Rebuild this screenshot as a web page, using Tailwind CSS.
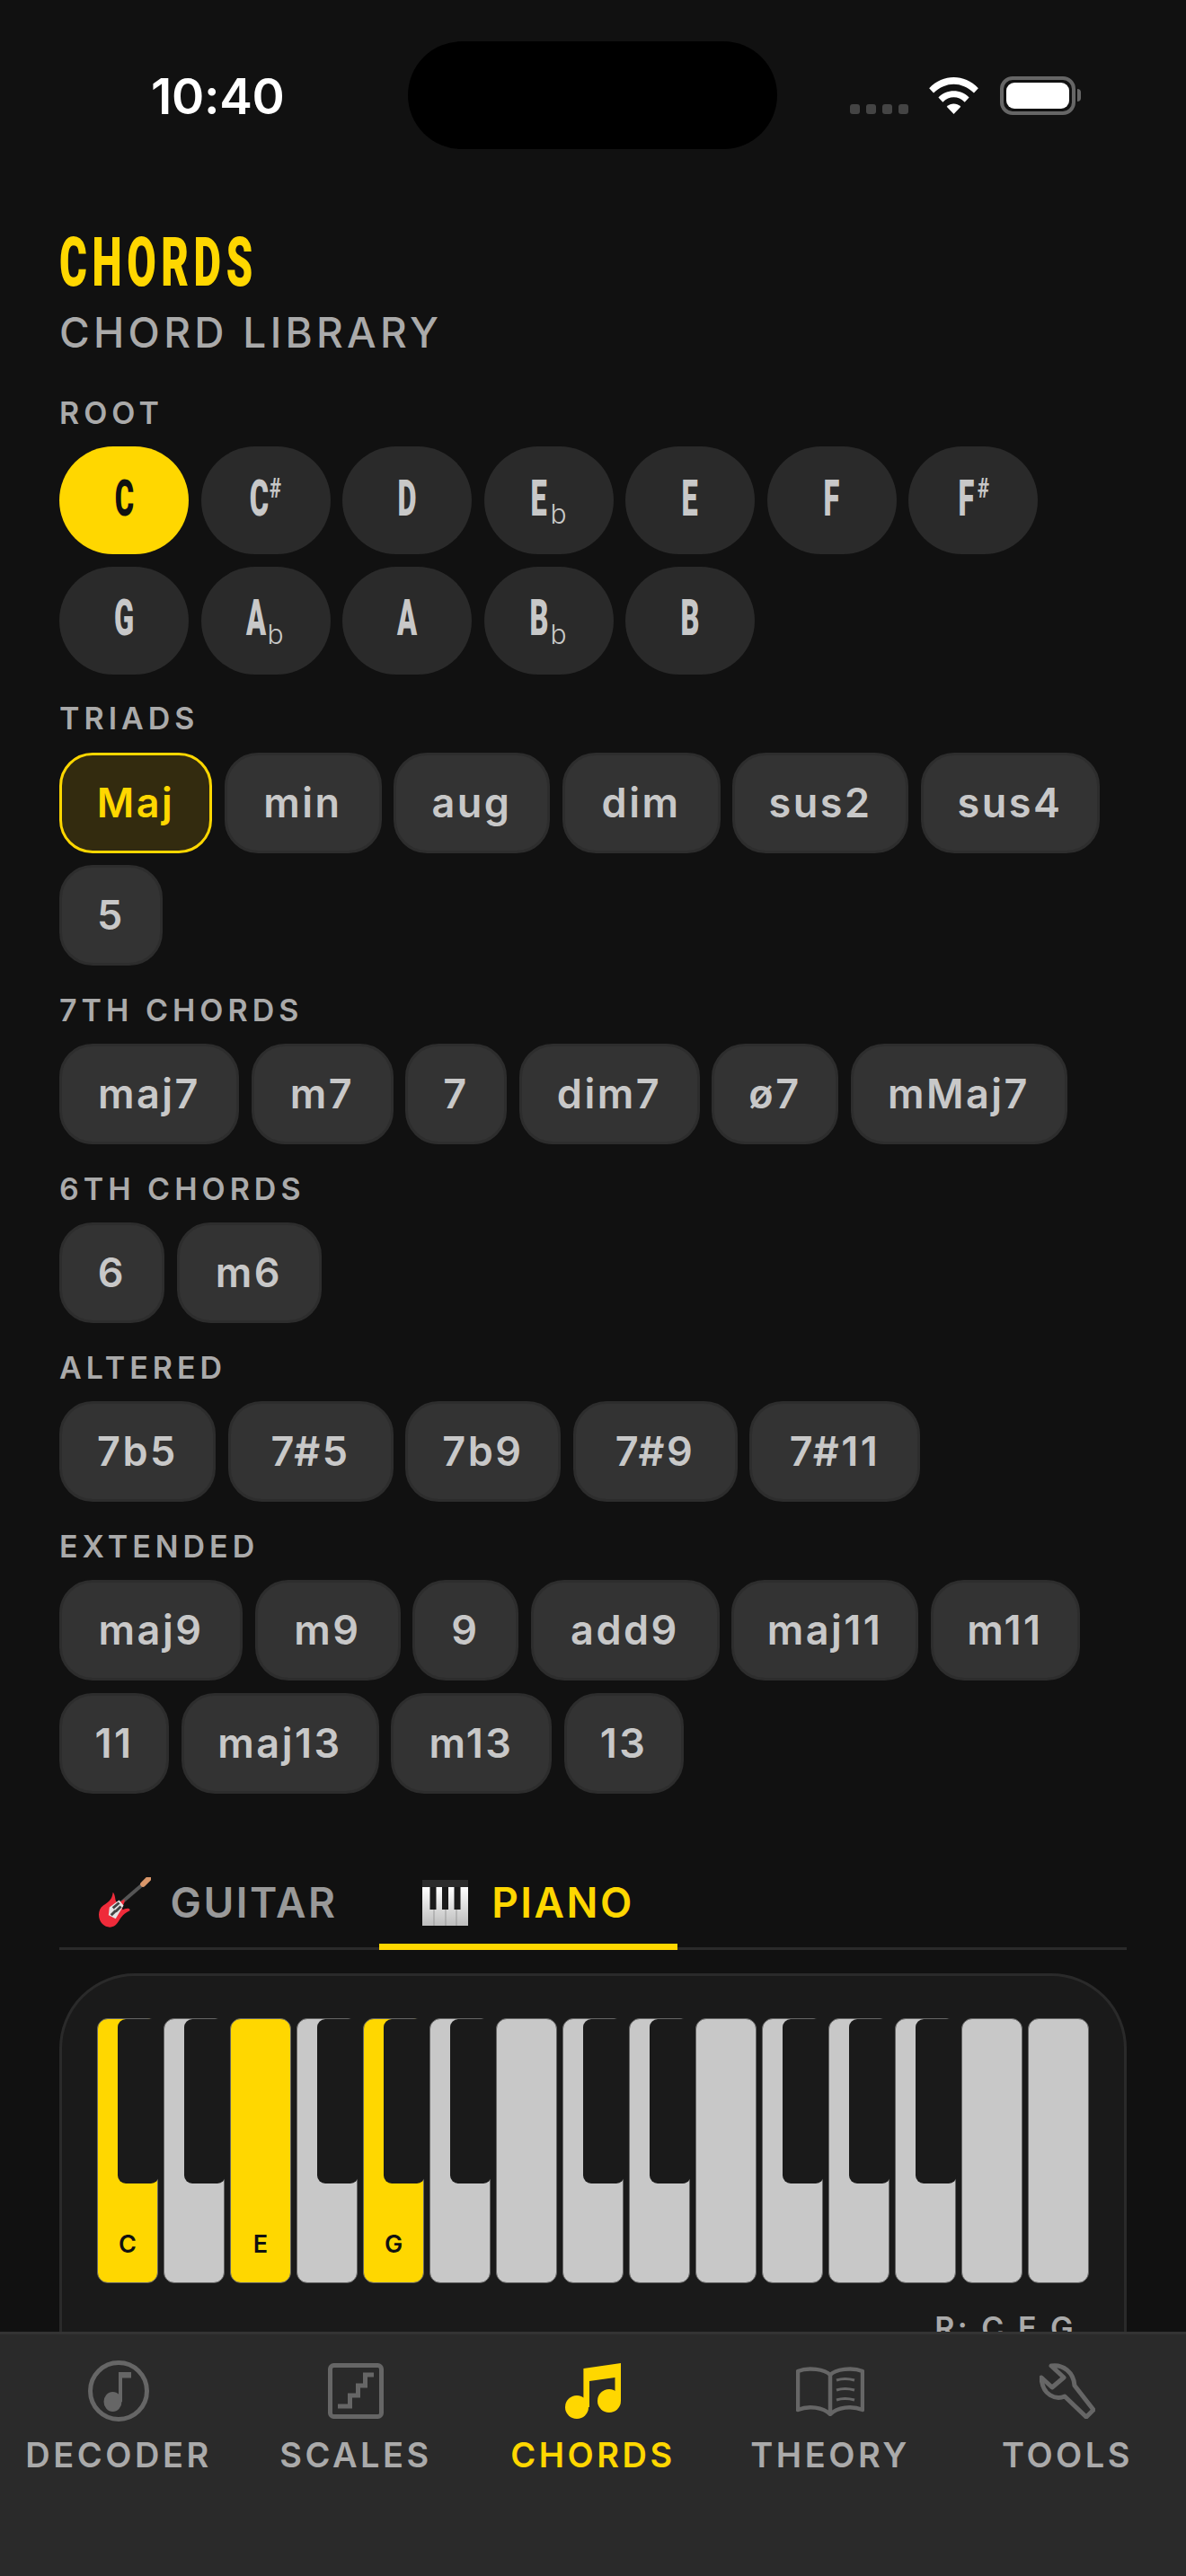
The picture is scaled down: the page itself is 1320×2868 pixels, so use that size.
<!DOCTYPE html>
<html lang="en">
<head>
    <meta charset="UTF-8">
    <title>Chords</title>
    <script src="https://cdn.jsdelivr.net/npm/@tailwindcss/browser@4"></script>
</head>
<body class="bg-[#111111]">
<div class="relative w-[1320px] h-[2868px] overflow-hidden bg-[#111111] font-['Inter',sans-serif]">

    <!-- Status bar -->
    <div class="absolute left-[168px] top-[74px] text-[55px] leading-[66px] font-semibold text-white tracking-[-0.3px]">10:40</div>
    <div class="absolute left-[454px] top-[46px] w-[411px] h-[120px] rounded-[60px] bg-black"></div>
    <div class="absolute left-[946px] top-[116px] flex gap-[7px]">
        <div class="w-[11px] h-[11px] rounded-[3px] bg-[#444444]"></div>
        <div class="w-[11px] h-[11px] rounded-[3px] bg-[#444444]"></div>
        <div class="w-[11px] h-[11px] rounded-[3px] bg-[#444444]"></div>
        <div class="w-[11px] h-[11px] rounded-[3px] bg-[#444444]"></div>
    </div>
    <svg class="absolute left-[1034px] top-[86px]" width="55" height="41" viewBox="0 0 56 42" fill="white">
        <path d="M0 12.500 C16 -4 40 -4 56 12.500 L51 18 C37 4.500 19 4.500 5 18Z"/>
        <path d="M10.500 23 C20 13 36 13 45.500 23 L40.500 28.500 C33 21 23 21 15.500 28.500Z"/>
        <path d="M20 33.500 C25 29 31 29 36 33.500 L28 42Z"/>
    </svg>
    <div class="absolute left-[1113px] top-[85px] w-[84px] h-[43px] rounded-[14px] border-[4px] border-[#666666] p-[3px]">
        <div class="w-full h-full rounded-[9px] bg-white"></div>
    </div>
    <div class="absolute left-[1199px] top-[99px] w-[4px] h-[14px] rounded-r-[4px] bg-[#666666]"></div>

    <!-- Main content -->
    <div class="px-[66px] pt-[252px]">
        <div class="inline-block origin-left scale-x-[0.62] font-['Roboto',sans-serif] font-black text-[76px] leading-[80px] tracking-[9px] text-[#ffd700]">CHORDS</div>
        <div class="mt-[10px] text-[46px] leading-[56px] font-medium tracking-[4.300px] text-[#aaaaaa]">CHORD LIBRARY</div>

        <div class="mt-[42px] text-[34px] leading-[40px] font-semibold tracking-[5px] text-[#aaaaaa]">ROOT</div>
        <div class="mt-[17px] flex flex-wrap gap-[13.500px] font-['Roboto',sans-serif] font-black text-[#c8c8c8] text-[56px]">
            <div class="w-[144px] h-[120px] rounded-[60px] flex items-center justify-center bg-[#ffd700] text-[#111111]"><div class="w-[19px] -mt-[5px] flex justify-center"><span class="inline-block scale-x-[0.58]">C</span></div></div>
            <div class="w-[144px] h-[120px] rounded-[60px] flex items-center justify-center bg-[#2a2a2a]"><div class="w-[19px] -mt-[5px] flex justify-center"><span class="inline-block scale-x-[0.58]">C</span></div><div class="w-[12px] ml-[3px] mb-[29px] flex justify-center text-[32px] font-bold leading-none"><span class="inline-block scale-x-[0.7]">#</span></div></div>
            <div class="w-[144px] h-[120px] rounded-[60px] flex items-center justify-center bg-[#2a2a2a]"><div class="w-[19px] -mt-[5px] flex justify-center"><span class="inline-block scale-x-[0.58]">D</span></div></div>
            <div class="w-[144px] h-[120px] rounded-[60px] flex items-center justify-center bg-[#2a2a2a]"><div class="w-[19px] -mt-[5px] flex justify-center"><span class="inline-block scale-x-[0.58]">E</span></div><div class="ml-[3px] mt-[30px] font-['Inter',sans-serif] font-light text-[30px] leading-none">b</div></div>
            <div class="w-[144px] h-[120px] rounded-[60px] flex items-center justify-center bg-[#2a2a2a]"><div class="w-[19px] -mt-[5px] flex justify-center"><span class="inline-block scale-x-[0.58]">E</span></div></div>
            <div class="w-[144px] h-[120px] rounded-[60px] flex items-center justify-center bg-[#2a2a2a]"><div class="w-[19px] -mt-[5px] flex justify-center"><span class="inline-block scale-x-[0.58]">F</span></div></div>
            <div class="w-[144px] h-[120px] rounded-[60px] flex items-center justify-center bg-[#2a2a2a]"><div class="w-[19px] -mt-[5px] flex justify-center"><span class="inline-block scale-x-[0.58]">F</span></div><div class="w-[12px] ml-[3px] mb-[29px] flex justify-center text-[32px] font-bold leading-none"><span class="inline-block scale-x-[0.7]">#</span></div></div>
            <div class="w-[144px] h-[120px] rounded-[60px] flex items-center justify-center bg-[#2a2a2a]"><div class="w-[19px] -mt-[5px] flex justify-center"><span class="inline-block scale-x-[0.58]">G</span></div></div>
            <div class="w-[144px] h-[120px] rounded-[60px] flex items-center justify-center bg-[#2a2a2a]"><div class="w-[19px] -mt-[5px] flex justify-center"><span class="inline-block scale-x-[0.58]">A</span></div><div class="ml-[3px] mt-[30px] font-['Inter',sans-serif] font-light text-[30px] leading-none">b</div></div>
            <div class="w-[144px] h-[120px] rounded-[60px] flex items-center justify-center bg-[#2a2a2a]"><div class="w-[19px] -mt-[5px] flex justify-center"><span class="inline-block scale-x-[0.58]">A</span></div></div>
            <div class="w-[144px] h-[120px] rounded-[60px] flex items-center justify-center bg-[#2a2a2a]"><div class="w-[19px] -mt-[5px] flex justify-center"><span class="inline-block scale-x-[0.58]">B</span></div><div class="ml-[3px] mt-[30px] font-['Inter',sans-serif] font-light text-[30px] leading-none">b</div></div>
            <div class="w-[144px] h-[120px] rounded-[60px] flex items-center justify-center bg-[#2a2a2a]"><div class="w-[19px] -mt-[5px] flex justify-center"><span class="inline-block scale-x-[0.58]">B</span></div></div>
        </div>

        <div class="mt-[29.500px] text-[34px] leading-[40px] font-semibold tracking-[5px] text-[#aaaaaa]">TRIADS</div>
        <div class="mt-[17.500px] flex flex-wrap gap-[13.500px] text-[45px] font-semibold tracking-[2.500px] text-[#c8c8c8]">
            <div class="w-[170px] h-[112px] rounded-[37px] flex items-center justify-center border-[3px] border-[#ffd700] bg-[#332b0f] text-[#ffd700]">Maj</div>
            <div class="w-[175px] h-[112px] rounded-[37px] flex items-center justify-center border-[3px] border-[#2d2d2d] bg-[#333333]">min</div>
            <div class="w-[174px] h-[112px] rounded-[37px] flex items-center justify-center border-[3px] border-[#2d2d2d] bg-[#333333]">aug</div>
            <div class="w-[176px] h-[112px] rounded-[37px] flex items-center justify-center border-[3px] border-[#2d2d2d] bg-[#333333]">dim</div>
            <div class="w-[196px] h-[112px] rounded-[37px] flex items-center justify-center border-[3px] border-[#2d2d2d] bg-[#333333]">sus2</div>
            <div class="w-[199px] h-[112px] rounded-[37px] flex items-center justify-center border-[3px] border-[#2d2d2d] bg-[#333333]">sus4</div>
            <div class="w-[115px] h-[112px] rounded-[37px] flex items-center justify-center border-[3px] border-[#2d2d2d] bg-[#333333]">5</div>
        </div>

        <div class="mt-[29.500px] text-[34px] leading-[40px] font-semibold tracking-[5px] text-[#aaaaaa]">7TH CHORDS</div>
        <div class="mt-[17.500px] flex flex-wrap gap-[13.500px] text-[45px] font-semibold tracking-[2.500px] text-[#c8c8c8]">
            <div class="w-[200px] h-[112px] rounded-[37px] flex items-center justify-center border-[3px] border-[#2d2d2d] bg-[#333333]">maj7</div>
            <div class="w-[158px] h-[112px] rounded-[37px] flex items-center justify-center border-[3px] border-[#2d2d2d] bg-[#333333]">m7</div>
            <div class="w-[113px] h-[112px] rounded-[37px] flex items-center justify-center border-[3px] border-[#2d2d2d] bg-[#333333]">7</div>
            <div class="w-[201px] h-[112px] rounded-[37px] flex items-center justify-center border-[3px] border-[#2d2d2d] bg-[#333333]">dim7</div>
            <div class="w-[141px] h-[112px] rounded-[37px] flex items-center justify-center border-[3px] border-[#2d2d2d] bg-[#333333]">ø7</div>
            <div class="w-[241px] h-[112px] rounded-[37px] flex items-center justify-center border-[3px] border-[#2d2d2d] bg-[#333333]">mMaj7</div>
        </div>

        <div class="mt-[29.500px] text-[34px] leading-[40px] font-semibold tracking-[5px] text-[#aaaaaa]">6TH CHORDS</div>
        <div class="mt-[17.500px] flex flex-wrap gap-[13.500px] text-[45px] font-semibold tracking-[2.500px] text-[#c8c8c8]">
            <div class="w-[117px] h-[112px] rounded-[37px] flex items-center justify-center border-[3px] border-[#2d2d2d] bg-[#333333]">6</div>
            <div class="w-[161px] h-[112px] rounded-[37px] flex items-center justify-center border-[3px] border-[#2d2d2d] bg-[#333333]">m6</div>
        </div>

        <div class="mt-[29.500px] text-[34px] leading-[40px] font-semibold tracking-[5px] text-[#aaaaaa]">ALTERED</div>
        <div class="mt-[17.500px] flex flex-wrap gap-[13.500px] text-[45px] font-semibold tracking-[2.500px] text-[#c8c8c8]">
            <div class="w-[174px] h-[112px] rounded-[37px] flex items-center justify-center border-[3px] border-[#2d2d2d] bg-[#333333]">7b5</div>
            <div class="w-[184px] h-[112px] rounded-[37px] flex items-center justify-center border-[3px] border-[#2d2d2d] bg-[#333333]">7#5</div>
            <div class="w-[173px] h-[112px] rounded-[37px] flex items-center justify-center border-[3px] border-[#2d2d2d] bg-[#333333]">7b9</div>
            <div class="w-[183px] h-[112px] rounded-[37px] flex items-center justify-center border-[3px] border-[#2d2d2d] bg-[#333333]">7#9</div>
            <div class="w-[190px] h-[112px] rounded-[37px] flex items-center justify-center border-[3px] border-[#2d2d2d] bg-[#333333]">7#11</div>
        </div>

        <div class="mt-[29.500px] text-[34px] leading-[40px] font-semibold tracking-[5px] text-[#aaaaaa]">EXTENDED</div>
        <div class="mt-[17.500px] flex flex-wrap gap-[13.500px] text-[45px] font-semibold tracking-[2.500px] text-[#c8c8c8]">
            <div class="w-[204px] h-[112px] rounded-[37px] flex items-center justify-center border-[3px] border-[#2d2d2d] bg-[#333333]">maj9</div>
            <div class="w-[162px] h-[112px] rounded-[37px] flex items-center justify-center border-[3px] border-[#2d2d2d] bg-[#333333]">m9</div>
            <div class="w-[118px] h-[112px] rounded-[37px] flex items-center justify-center border-[3px] border-[#2d2d2d] bg-[#333333]">9</div>
            <div class="w-[210px] h-[112px] rounded-[37px] flex items-center justify-center border-[3px] border-[#2d2d2d] bg-[#333333]">add9</div>
            <div class="w-[208px] h-[112px] rounded-[37px] flex items-center justify-center border-[3px] border-[#2d2d2d] bg-[#333333]">maj11</div>
            <div class="w-[166px] h-[112px] rounded-[37px] flex items-center justify-center border-[3px] border-[#2d2d2d] bg-[#333333]">m11</div>
            <div class="w-[122px] h-[112px] rounded-[37px] flex items-center justify-center border-[3px] border-[#2d2d2d] bg-[#333333]">11</div>
            <div class="w-[220px] h-[112px] rounded-[37px] flex items-center justify-center border-[3px] border-[#2d2d2d] bg-[#333333]">maj13</div>
            <div class="w-[179px] h-[112px] rounded-[37px] flex items-center justify-center border-[3px] border-[#2d2d2d] bg-[#333333]">m13</div>
            <div class="w-[133px] h-[112px] rounded-[37px] flex items-center justify-center border-[3px] border-[#2d2d2d] bg-[#333333]">13</div>
        </div>

        <!-- Guitar / piano tabs -->
        <div class="mt-[62.500px] flex gap-[14px] pl-[10px] border-b-[3px] border-[#2a2a2a] text-[46px] font-semibold tracking-[2.500px]">
            <div class="w-[332px] h-[112px] -mb-[3px] pt-[14px] border-b-[7px] border-transparent flex items-center justify-center gap-[22px] text-[#999999]">
                <svg width="59" height="57" viewBox="0 0 60 58">
                    <path d="M24 31 L53 6" stroke="#555555" stroke-width="4"/>
                    <path d="M51 8 L58 1" stroke="#d9976a" stroke-width="6" stroke-linecap="round"/>
                    <path d="M17 17 C16 24 14 27 6 32 C-1 37 0 48 5 53 C10 58 18 58 22 52 C26 47 26 43 36 38 C37 34 31 35 28 37 C26 33 31 30 30 25 C27 27 23 30 21 28 C19 26 20 20 17 17Z" fill="#ef2b3a"/>
                    <path d="M13 34 L24 26 L29 32 L20 47 L12 43Z" fill="#e4e4e4"/>
                    <path d="M17 35 L24 29 M20 39 L26 33 M15 43 L20 38" stroke="#444444" stroke-width="3"/>
                </svg>
                <span>GUITAR</span>
            </div>
            <div class="w-[332px] h-[112px] -mb-[3px] pt-[14px] border-b-[7px] border-[#ffd700] flex items-center justify-center gap-[26px] text-[#ffd700]">
                <svg width="51" height="51" viewBox="0 0 51 51">
                    <defs>
                        <linearGradient id="pianokey" x1="0" y1="0" x2="0" y2="1">
                            <stop offset="0" stop-color="#ffffff"/>
                            <stop offset="1" stop-color="#bdbdbd"/>
                        </linearGradient>
                    </defs>
                    <rect x="0" y="0" width="51" height="8" fill="#2b2b2b"/>
                    <rect x="0" y="8" width="51" height="43" fill="url(#pianokey)"/>
                    <path d="M13 8 V51 M26 8 V51 M38 8 V51" stroke="#999999" stroke-width="1"/>
                    <rect x="8.500" y="8" width="7" height="25" fill="#1a1a1a"/>
                    <rect x="22" y="8" width="7" height="25" fill="#1a1a1a"/>
                    <rect x="35.500" y="8" width="7" height="25" fill="#1a1a1a"/>
                </svg>
                <span>PIANO</span>
            </div>
        </div>

        <!-- Piano card, runs on under the nav bar -->
        <div class="mt-[26px] h-[600px] rounded-[84px] border-[3px] border-[#2a2a2a] bg-[#1a1a1a] pl-[39px] pt-[47px]">
            <div class="w-[1104px] grid grid-cols-15 gap-[6px] text-[27px] font-semibold text-[#111111]">
                <div class="relative h-[295px] rounded-[12px] border-[1.500px] border-[#666666] bg-[#ffd700] flex items-end justify-center pb-[22px]">C<div class="absolute top-0 -right-[1.500px] w-[46px] h-[183px] rounded-tl-[9px] rounded-b-[9px] bg-[#1a1a1a]"></div></div>
                <div class="relative h-[295px] rounded-[12px] border-[1.500px] border-[#666666] bg-[#c8c8c8]"><div class="absolute top-0 -right-[1.500px] w-[46px] h-[183px] rounded-tl-[9px] rounded-b-[9px] bg-[#1a1a1a]"></div></div>
                <div class="relative h-[295px] rounded-[12px] border-[1.500px] border-[#666666] bg-[#ffd700] flex items-end justify-center pb-[22px]">E</div>
                <div class="relative h-[295px] rounded-[12px] border-[1.500px] border-[#666666] bg-[#c8c8c8]"><div class="absolute top-0 -right-[1.500px] w-[46px] h-[183px] rounded-tl-[9px] rounded-b-[9px] bg-[#1a1a1a]"></div></div>
                <div class="relative h-[295px] rounded-[12px] border-[1.500px] border-[#666666] bg-[#ffd700] flex items-end justify-center pb-[22px]">G<div class="absolute top-0 -right-[1.500px] w-[46px] h-[183px] rounded-tl-[9px] rounded-b-[9px] bg-[#1a1a1a]"></div></div>
                <div class="relative h-[295px] rounded-[12px] border-[1.500px] border-[#666666] bg-[#c8c8c8]"><div class="absolute top-0 -right-[1.500px] w-[46px] h-[183px] rounded-tl-[9px] rounded-b-[9px] bg-[#1a1a1a]"></div></div>
                <div class="relative h-[295px] rounded-[12px] border-[1.500px] border-[#666666] bg-[#c8c8c8]"></div>
                <div class="relative h-[295px] rounded-[12px] border-[1.500px] border-[#666666] bg-[#c8c8c8]"><div class="absolute top-0 -right-[1.500px] w-[46px] h-[183px] rounded-tl-[9px] rounded-b-[9px] bg-[#1a1a1a]"></div></div>
                <div class="relative h-[295px] rounded-[12px] border-[1.500px] border-[#666666] bg-[#c8c8c8]"><div class="absolute top-0 -right-[1.500px] w-[46px] h-[183px] rounded-tl-[9px] rounded-b-[9px] bg-[#1a1a1a]"></div></div>
                <div class="relative h-[295px] rounded-[12px] border-[1.500px] border-[#666666] bg-[#c8c8c8]"></div>
                <div class="relative h-[295px] rounded-[12px] border-[1.500px] border-[#666666] bg-[#c8c8c8]"><div class="absolute top-0 -right-[1.500px] w-[46px] h-[183px] rounded-tl-[9px] rounded-b-[9px] bg-[#1a1a1a]"></div></div>
                <div class="relative h-[295px] rounded-[12px] border-[1.500px] border-[#666666] bg-[#c8c8c8]"><div class="absolute top-0 -right-[1.500px] w-[46px] h-[183px] rounded-tl-[9px] rounded-b-[9px] bg-[#1a1a1a]"></div></div>
                <div class="relative h-[295px] rounded-[12px] border-[1.500px] border-[#666666] bg-[#c8c8c8]"><div class="absolute top-0 -right-[1.500px] w-[46px] h-[183px] rounded-tl-[9px] rounded-b-[9px] bg-[#1a1a1a]"></div></div>
                <div class="relative h-[295px] rounded-[12px] border-[1.500px] border-[#666666] bg-[#c8c8c8]"></div>
                <div class="relative h-[295px] rounded-[12px] border-[1.500px] border-[#666666] bg-[#c8c8c8]"></div>
            </div>
            <div class="w-[1104px] mt-[29.500px] pr-[14px] text-right text-[34px] leading-[40px] font-semibold tracking-[3.500px] text-[#aaaaaa]">R: C E G</div>
        </div>
    </div>

    <!-- Bottom nav -->
    <div class="absolute left-0 top-[2596px] w-[1320px] h-[272px] bg-[#2a2a2a] border-t-[3px] border-[#333333] pt-[26px] grid grid-cols-5 text-[38px] leading-[46px] font-semibold tracking-[3.500px] text-[#aaaaaa]">
        <div class="flex flex-col items-center">
            <div class="h-[74px] flex items-center justify-center">
                <svg width="68" height="68" viewBox="0 0 68 68" fill="#666666">
                    <circle cx="34" cy="34" r="31.500" fill="none" stroke="#666666" stroke-width="5"/>
                    <ellipse cx="27.500" cy="46" rx="10" ry="11"/>
                    <path d="M34 46 V13 H48 V19.500 H38 V46Z"/>
                </svg>
            </div>
            <div class="mt-[11px]">DECODER</div>
        </div>
        <div class="flex flex-col items-center">
            <div class="h-[74px] flex items-center justify-center">
                <svg width="62" height="62" viewBox="0 0 62 62" fill="none" stroke="#666666" stroke-width="5">
                    <rect x="2.500" y="2.500" width="57" height="57" rx="4"/>
                    <path d="M11 48 H24.500 V36 H33.500 V25 H41.500 V13 H51"/>
                </svg>
            </div>
            <div class="mt-[11px]">SCALES</div>
        </div>
        <div class="flex flex-col items-center text-[#ffd700]">
            <div class="h-[74px] flex items-center justify-center">
                <svg width="62" height="62" viewBox="0 0 62 62" fill="#ffd700">
                    <ellipse cx="13" cy="49" rx="13" ry="13"/>
                    <ellipse cx="49" cy="42" rx="13" ry="13"/>
                    <path d="M20.400 6 L62 0 V42 H55.500 V16 L27 20 V49 H20.400Z"/>
                </svg>
            </div>
            <div class="mt-[11px]">CHORDS</div>
        </div>
        <div class="flex flex-col items-center">
            <div class="h-[74px] flex items-center justify-center">
                <svg width="76" height="55" viewBox="0 0 76 55" fill="none" stroke="#666666" stroke-width="4.500" stroke-linejoin="round">
                    <path d="M38 9 C32 3 14 0 2 5 V48 C14 43 30 45 38 53 C46 45 62 43 74 48 V5 C62 0 44 3 38 9Z"/>
                    <path d="M38 9 V50"/>
                    <path d="M45 15 C51 13 58 13 65 15 M45 26 C51 24 58 24 65 26 M45 37 C51 35 58 35 65 37" stroke-width="3"/>
                </svg>
            </div>
            <div class="mt-[11px]">THEORY</div>
        </div>
        <div class="flex flex-col items-center">
            <div class="h-[74px] flex items-center justify-center">
                <svg width="62" height="62" viewBox="0 0 62 62" fill="none" stroke="#666666" stroke-width="5" stroke-linejoin="round">
                    <path d="M13 3 C26 1 38 10 39 25 L60 52 L52 60 L28 37 C18 41 3 36 2 16 L14 27 L27 16Z"/>
                </svg>
            </div>
            <div class="mt-[11px]">TOOLS</div>
        </div>
    </div>
</div>
</body>
</html>
